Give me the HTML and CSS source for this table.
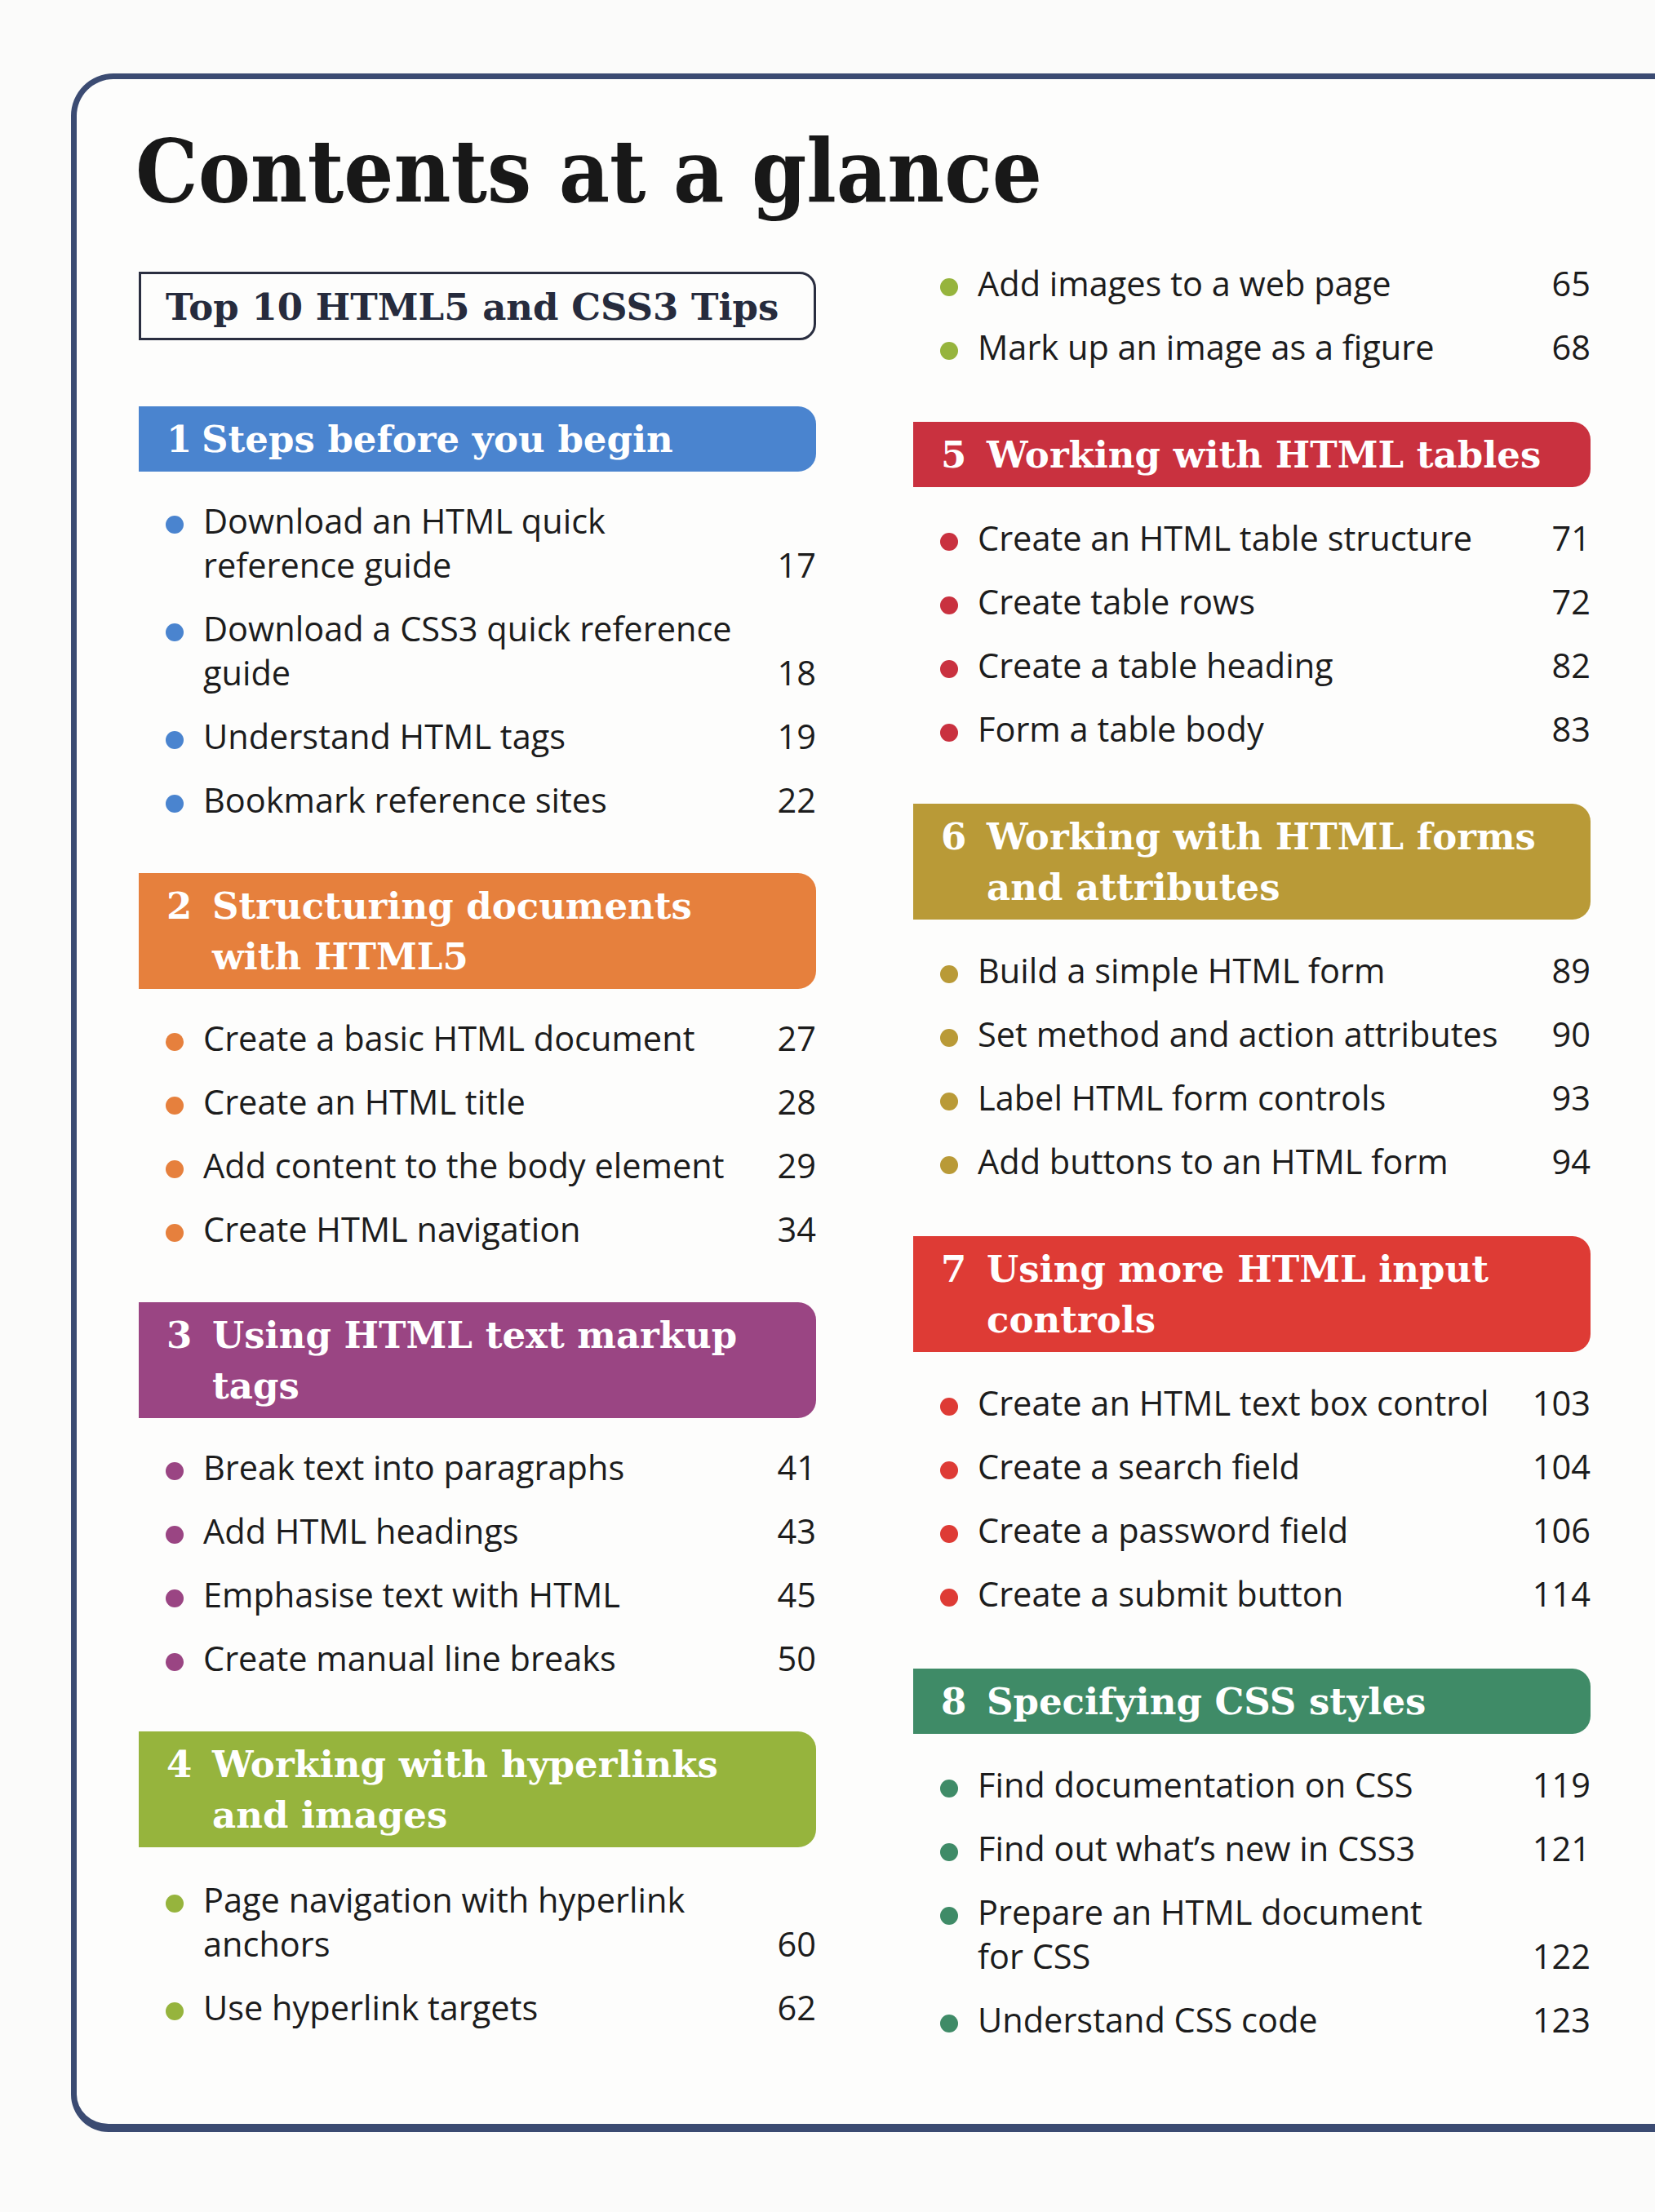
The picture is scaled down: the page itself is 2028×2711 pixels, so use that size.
FILE: index.html
```html
<!DOCTYPE html>
<html lang="en">
<head>
<meta charset="utf-8">
<title>Contents at a glance</title>
<link rel="stylesheet" href="styles.css">
</head>
<body>
<div class="frame">
  <h1 class="title">Contents at a glance</h1>
  <div class="cols">
    <div class="col col-left">
      <div class="tips">Top 10 HTML5 and CSS3 Tips</div>

      <section class="sec c-blue">
        <h2 class="bar"><span class="num num-narrow">1</span><span class="name">Steps before you begin</span></h2>
        <ul class="items">
          <li class="item"><span class="dot"></span><span class="label">Download an HTML quick<br>reference guide</span><span class="page">17</span></li>
          <li class="item"><span class="dot"></span><span class="label">Download a CSS3 quick reference<br>guide</span><span class="page">18</span></li>
          <li class="item"><span class="dot"></span><span class="label">Understand HTML tags</span><span class="page">19</span></li>
          <li class="item"><span class="dot"></span><span class="label">Bookmark reference sites</span><span class="page">22</span></li>
        </ul>
      </section>

      <section class="sec c-orange">
        <h2 class="bar"><span class="num">2</span><span class="name">Structuring documents<br>with HTML5</span></h2>
        <ul class="items">
          <li class="item"><span class="dot"></span><span class="label">Create a basic HTML document</span><span class="page">27</span></li>
          <li class="item"><span class="dot"></span><span class="label">Create an HTML title</span><span class="page">28</span></li>
          <li class="item"><span class="dot"></span><span class="label">Add content to the body element</span><span class="page">29</span></li>
          <li class="item"><span class="dot"></span><span class="label">Create HTML navigation</span><span class="page">34</span></li>
        </ul>
      </section>

      <section class="sec c-purple">
        <h2 class="bar"><span class="num">3</span><span class="name">Using HTML text markup<br>tags</span></h2>
        <ul class="items">
          <li class="item"><span class="dot"></span><span class="label">Break text into paragraphs</span><span class="page">41</span></li>
          <li class="item"><span class="dot"></span><span class="label">Add HTML headings</span><span class="page">43</span></li>
          <li class="item"><span class="dot"></span><span class="label">Emphasise text with HTML</span><span class="page">45</span></li>
          <li class="item"><span class="dot"></span><span class="label">Create manual line breaks</span><span class="page">50</span></li>
        </ul>
      </section>

      <section class="sec c-green">
        <h2 class="bar"><span class="num">4</span><span class="name">Working with hyperlinks<br>and images</span></h2>
        <ul class="items">
          <li class="item"><span class="dot"></span><span class="label">Page navigation with hyperlink<br>anchors</span><span class="page">60</span></li>
          <li class="item"><span class="dot"></span><span class="label">Use hyperlink targets</span><span class="page">62</span></li>
        </ul>
      </section>
    </div>

    <div class="col col-right">
      <section class="sec sec-cont c-green">
        <ul class="items">
          <li class="item"><span class="dot"></span><span class="label">Add images to a web page</span><span class="page">65</span></li>
          <li class="item"><span class="dot"></span><span class="label">Mark up an image as a figure</span><span class="page">68</span></li>
        </ul>
      </section>

      <section class="sec c-crimson">
        <h2 class="bar"><span class="num">5</span><span class="name">Working with HTML tables</span></h2>
        <ul class="items">
          <li class="item"><span class="dot"></span><span class="label">Create an HTML table structure</span><span class="page">71</span></li>
          <li class="item"><span class="dot"></span><span class="label">Create table rows</span><span class="page">72</span></li>
          <li class="item"><span class="dot"></span><span class="label">Create a table heading</span><span class="page">82</span></li>
          <li class="item"><span class="dot"></span><span class="label">Form a table body</span><span class="page">83</span></li>
        </ul>
      </section>

      <section class="sec c-mustard">
        <h2 class="bar"><span class="num">6</span><span class="name">Working with HTML forms<br>and attributes</span></h2>
        <ul class="items">
          <li class="item"><span class="dot"></span><span class="label">Build a simple HTML form</span><span class="page">89</span></li>
          <li class="item"><span class="dot"></span><span class="label">Set method and action attributes</span><span class="page">90</span></li>
          <li class="item"><span class="dot"></span><span class="label">Label HTML form controls</span><span class="page">93</span></li>
          <li class="item"><span class="dot"></span><span class="label">Add buttons to an HTML form</span><span class="page">94</span></li>
        </ul>
      </section>

      <section class="sec c-red">
        <h2 class="bar"><span class="num">7</span><span class="name">Using more HTML input<br>controls</span></h2>
        <ul class="items">
          <li class="item"><span class="dot"></span><span class="label">Create an HTML text box control</span><span class="page">103</span></li>
          <li class="item"><span class="dot"></span><span class="label">Create a search field</span><span class="page">104</span></li>
          <li class="item"><span class="dot"></span><span class="label">Create a password field</span><span class="page">106</span></li>
          <li class="item"><span class="dot"></span><span class="label">Create a submit button</span><span class="page">114</span></li>
        </ul>
      </section>

      <section class="sec c-teal">
        <h2 class="bar"><span class="num">8</span><span class="name">Specifying CSS styles</span></h2>
        <ul class="items">
          <li class="item"><span class="dot"></span><span class="label">Find documentation on CSS</span><span class="page">119</span></li>
          <li class="item"><span class="dot"></span><span class="label">Find out what’s new in CSS3</span><span class="page">121</span></li>
          <li class="item"><span class="dot"></span><span class="label">Prepare an HTML document<br>for CSS</span><span class="page">122</span></li>
          <li class="item"><span class="dot"></span><span class="label">Understand CSS code</span><span class="page">123</span></li>
        </ul>
      </section>
    </div>
  </div>
</div>
</body>
</html>
```

FILE: styles.css
```css
html, body {
  margin: 0;
  padding: 0;
  overflow: hidden;
  background: #fbfbfa;
}

body {
  width: 2028px;
  height: 2711px;
  font-family: "Open Sans", "Noto Sans", sans-serif;
  color: #1c1c1c;
}

.frame {
  box-sizing: border-box;
  margin: 90px 0 0 87px;
  width: 2060px;
  height: 2523px;
  border: 7px solid #3b4b72;
  border-bottom-width: 10px;
  border-radius: 52px 0 0 46px;
  padding: 53px 0 0 76px;
  background: #fdfdfc;
}

.title {
  margin: 0 0 0 -4px;
  font-family: "DejaVu Serif", "Liberation Serif", serif;
  font-stretch: condensed;
  font-weight: bold;
  font-size: 107px;
  line-height: 120px;
  color: #181818;
}

.cols {
  display: grid;
  grid-template-columns: 830px 830px;
  column-gap: 119px;
  margin-top: 47px;
  align-items: start;
}

.col-right {
  padding-top: 3px;
}

.tips {
  box-sizing: border-box;
  margin-top: 16px;
  height: 84px;
  border: 3px solid #2a2e40;
  border-radius: 0 20px 20px 0;
  padding: 4px 0 0 30px;
  font-family: "DejaVu Serif", "Liberation Serif", serif;
  font-weight: bold;
  font-size: 45px;
  line-height: 74px;
  color: #262b3d;
}

.col-left .tips + .sec {
  margin-top: 81px;
}

.sec {
  margin-bottom: 63px;
}

.col-right .sec {
  margin-bottom: 65px;
}

.col-left .sec:last-child,
.col-right .sec:last-child {
  margin-bottom: 0;
}

.bar {
  display: flex;
  margin: 0;
  padding: 10px 0 8px 34px;
  border-radius: 0 22px 22px 0;
  font-family: "DejaVu Serif", "Liberation Serif", serif;
  font-weight: bold;
  font-size: 45px;
  line-height: 62px;
  color: #ffffff;
}

.num {
  flex: 0 0 56px;
}

.num-narrow {
  flex-basis: 43px;
}

.items {
  list-style: none;
  margin: 33px 0 0;
  padding: 0;
}

.col-left .sec:last-child .items {
  margin-top: 37px;
}

.col-right .items {
  margin-top: 35px;
}

.col-right .sec-cont .items {
  margin-top: 0;
}

.item {
  display: flex;
  align-items: flex-end;
  font-size: 41.5px;
  line-height: 54px;
  margin-bottom: 24px;
}

.item:last-child {
  margin-bottom: 0;
}

.dot {
  align-self: flex-start;
  flex: 0 0 22px;
  height: 22px;
  margin: 21px 24px 0 33px;
  border-radius: 50%;
}

.label {
  flex: 1;
}

.page {
  margin-left: 20px;
  text-align: right;
}

.c-blue .bar, .c-blue .dot { background: #4a84cf; }
.c-orange .bar, .c-orange .dot { background: #e6803d; }
.c-purple .bar, .c-purple .dot { background: #9a4583; }
.c-green .bar, .c-green .dot { background: #96b43d; }
.c-crimson .bar, .c-crimson .dot { background: #c9313f; }
.c-mustard .bar, .c-mustard .dot { background: #b99a37; }
.c-red .bar, .c-red .dot { background: #de3b35; }
.c-teal .bar, .c-teal .dot { background: #3f8b67; }
```
